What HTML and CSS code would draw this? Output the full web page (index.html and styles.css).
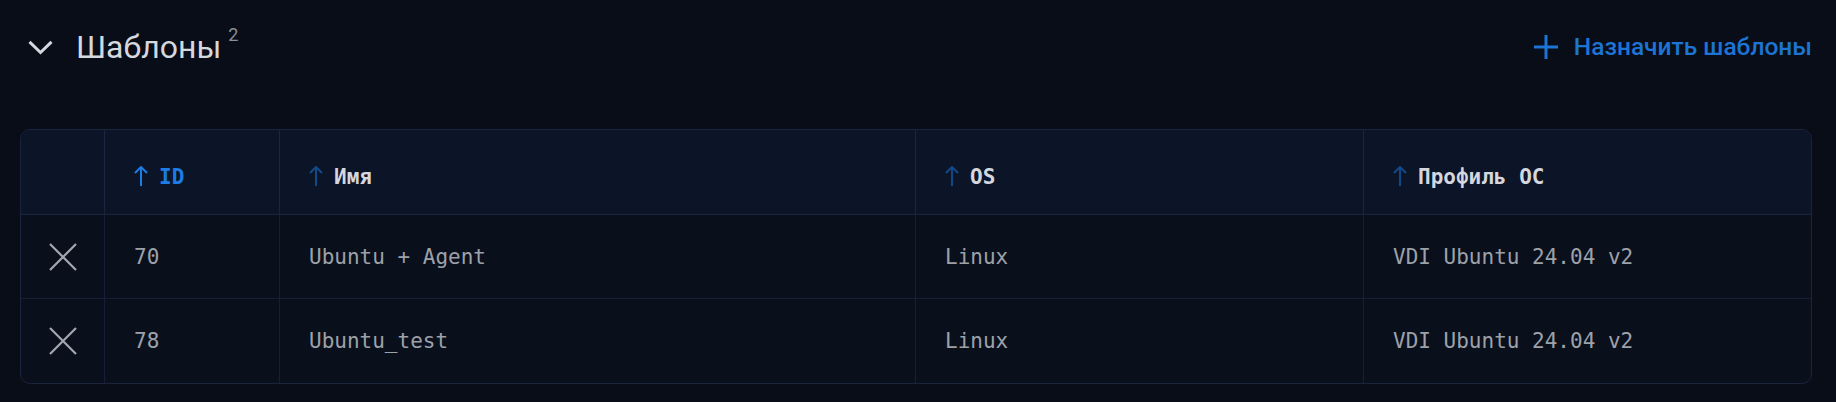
FILE: index.html
```html
<!DOCTYPE html>
<html lang="ru">
<head>
<meta charset="utf-8">
<title>Шаблоны</title>
<link rel="stylesheet" href="styles.css">
</head>
<body>
<section class="section">
  <header class="section-head">
    <div class="title-group">
      <svg class="chevron" width="25" height="15" viewBox="0 0 25 15"><polyline points="1.5,1.8 12.5,12.5 23.5,1.8" fill="none" stroke="currentColor" stroke-width="3"/></svg>
      <h2 class="title">Шаблоны</h2>
      <sup class="count">2</sup>
    </div>
    <button class="assign">
      <svg class="plus" width="24" height="24" viewBox="0 0 24 24"><path d="M12 0V24M0 12H24" stroke="currentColor" stroke-width="3"/></svg>
      <span>Назначить шаблоны</span>
    </button>
  </header>

  <div class="table">
    <div class="row head">
      <div class="cell"></div>
      <div class="cell"><span class="sort active"><svg width="14" height="20" viewBox="0 0 14 20"><path d="M7 1V20M1 7L7 1L13 7" fill="none" stroke="currentColor" stroke-width="2"/></svg></span><span class="hlabel active">ID</span></div>
      <div class="cell"><span class="sort"><svg width="14" height="20" viewBox="0 0 14 20"><path d="M7 1V20M1 7L7 1L13 7" fill="none" stroke="currentColor" stroke-width="2"/></svg></span><span class="hlabel">Имя</span></div>
      <div class="cell"><span class="sort"><svg width="14" height="20" viewBox="0 0 14 20"><path d="M7 1V20M1 7L7 1L13 7" fill="none" stroke="currentColor" stroke-width="2"/></svg></span><span class="hlabel">OS</span></div>
      <div class="cell"><span class="sort"><svg width="14" height="20" viewBox="0 0 14 20"><path d="M7 1V20M1 7L7 1L13 7" fill="none" stroke="currentColor" stroke-width="2"/></svg></span><span class="hlabel">Профиль ОС</span></div>
    </div>
    <div class="row">
      <div class="cell icon"><svg width="28" height="28" viewBox="0 0 28 28"><path d="M1 1L27 27M27 1L1 27" stroke="currentColor" stroke-width="2.2"/></svg></div>
      <div class="cell">70</div>
      <div class="cell">Ubuntu + Agent</div>
      <div class="cell">Linux</div>
      <div class="cell">VDI Ubuntu 24.04 v2</div>
    </div>
    <div class="row">
      <div class="cell icon"><svg width="28" height="28" viewBox="0 0 28 28"><path d="M1 1L27 27M27 1L1 27" stroke="currentColor" stroke-width="2.2"/></svg></div>
      <div class="cell">78</div>
      <div class="cell">Ubuntu_test</div>
      <div class="cell">Linux</div>
      <div class="cell">VDI Ubuntu 24.04 v2</div>
    </div>
  </div>
</section>
</body>
</html>
```

FILE: styles.css
```css
* { box-sizing: border-box; }
html, body {
  margin: 0;
  background: #080d18;
  height: 100%;
}
body {
  font-family: Roboto, "Noto Sans", sans-serif;
}
.section {
  padding: 0 24px 0 20px;
}
.section-head {
  height: 94px;
  display: flex;
  align-items: center;
  justify-content: space-between;
  margin-bottom: 35px;
}
.title-group {
  display: flex;
  align-items: center;
  padding-left: 8px;
}
.chevron {
  color: #d5d8de;
  margin-right: 23px;
}
.title {
  margin: 0;
  font-weight: 400;
  font-size: 32px;
  line-height: 40px;
  color: #d5d8de;
}
.count {
  align-self: flex-start;
  margin-left: 7px;
  margin-top: -2px;
  font-size: 18px;
  line-height: 20px;
  color: #8b9099;
}
.assign {
  display: flex;
  align-items: center;
  gap: 16px;
  background: none;
  border: 0;
  padding: 0;
  color: #1c74d4;
  font-family: Roboto, "Noto Sans", sans-serif;
  font-weight: 500;
  font-size: 24.5px;
  line-height: 30px;
  cursor: pointer;
}
.table {
  border: 1px solid #1a243d;
  border-radius: 10px;
  overflow: hidden;
  background: #0a0f1c;
  font-family: "DejaVu Sans Mono", "Liberation Mono", monospace;
  font-size: 21px;
}
.row {
  display: grid;
  grid-template-columns: 84px 175px 636px 448px 1fr;
  height: 84px;
  border-bottom: 1px solid #161f36;
}
.row:last-child { border-bottom: 0; }
.row.head {
  height: 85px;
  background: #0c1428;
  border-bottom-color: #1a2540;
}
.cell {
  display: flex;
  align-items: center;
  padding-left: 29px;
  border-right: 1px solid #161f36;
  color: #9da1a9;
  white-space: pre;
}
.row.head .cell {
  border-right-color: #1a2540;
  padding-top: 9px;
}
.cell:last-child { border-right: 0; }
.cell.icon {
  padding-left: 0;
  justify-content: center;
  color: #a3a7ae;
}
.sort {
  display: flex;
  color: #124a88;
  margin-right: 11px;
  margin-top: -2px;
}
.sort.active { color: #1a7ee6; }
.hlabel {
  font-weight: 700;
  color: #d4d7dd;
}
.hlabel.active { color: #1a7ee6; }
```
